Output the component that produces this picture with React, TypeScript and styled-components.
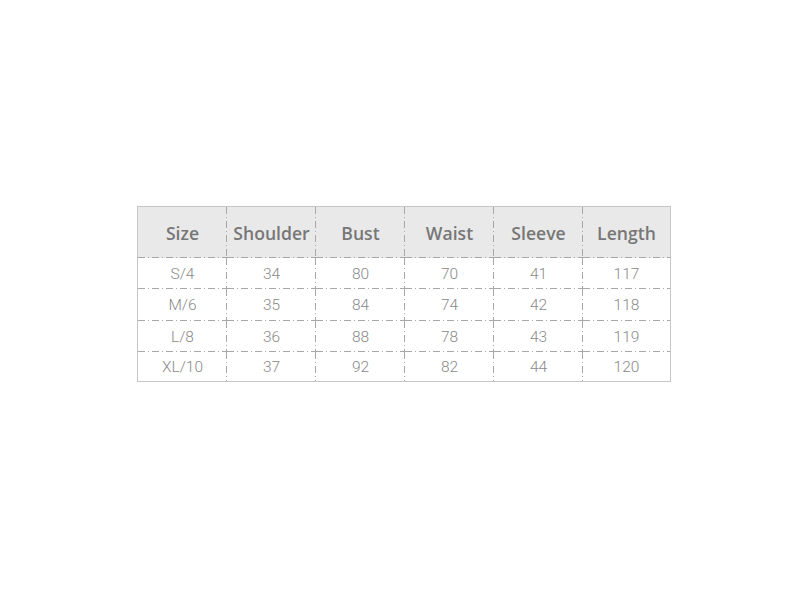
import React from "react";
import styled, { createGlobalStyle } from "styled-components";

const GlobalStyle = createGlobalStyle`
  body {
    margin: 0;
    background: #fff;
  }
`;

const Page = styled.div`
  width: 810px;
  height: 590px;
  padding: 206px 0 0 137px;
  box-sizing: border-box;
`;

const Table = styled.div`
  width: 534px;
  box-sizing: border-box;
  border: 1px solid #c6c6c6;
  display: grid;
  grid-template-columns: 89px 89px 89px 89px 89px 87px;
  grid-template-rows: 51px 31px 32px 31px 29px;
`;

const hLine =
  "repeating-linear-gradient(to right, #a8a8a8 0 7px, transparent 7px 10px, #a8a8a8 10px 11px, transparent 11px 14px)";
const vLine =
  "repeating-linear-gradient(to bottom, #a8a8a8 0 7px, transparent 7px 10px, #a8a8a8 10px 11px, transparent 11px 14px)";

const Cell = styled.div<{ $head?: boolean; $lastCol?: boolean; $lastRow?: boolean }>`
  display: flex;
  align-items: center;
  justify-content: center;
  font-family: ${(p) => (p.$head ? '"Open Sans", "Noto Sans", sans-serif' : 'Roboto, "Noto Sans", sans-serif')};
  font-size: ${(p) => (p.$head ? "17.6px" : "15.5px")};
  font-weight: ${(p) => (p.$head ? 600 : 300)};
  color: ${(p) => (p.$head ? "#777" : "#8a8a8a")};
  background-color: ${(p) => (p.$head ? "#e9e9e9" : "#fff")};
  background-image: ${(p) =>
    [p.$lastRow ? null : hLine, p.$lastCol ? null : vLine].filter(Boolean).join(", ") || "none"};
  background-size: ${(p) =>
    [p.$lastRow ? null : "100% 1px", p.$lastCol ? null : "1px 100%"].filter(Boolean).join(", ") || "auto"};
  background-position: ${(p) =>
    [p.$lastRow ? null : "left bottom", p.$lastCol ? null : "right top"].filter(Boolean).join(", ") || "0 0"};
  background-repeat: no-repeat;
`;

const headers = ["Size", "Shoulder", "Bust", "Waist", "Sleeve", "Length"];
const rows = [
  ["S/4", "34", "80", "70", "41", "117"],
  ["M/6", "35", "84", "74", "42", "118"],
  ["L/8", "36", "88", "78", "43", "119"],
  ["XL/10", "37", "92", "82", "44", "120"],
];

export default function App() {
  return (
    <>
      <GlobalStyle />
      <Page>
        <Table>
          {headers.map((h, i) => (
            <Cell key={h} $head $lastCol={i === headers.length - 1}>
              {h}
            </Cell>
          ))}
          {rows.map((r, ri) =>
            r.map((v, ci) => (
              <Cell
                key={`${ri}-${ci}`}
                $lastCol={ci === r.length - 1}
                $lastRow={ri === rows.length - 1}
              >
                {v}
              </Cell>
            ))
          )}
        </Table>
      </Page>
    </>
  );
}
